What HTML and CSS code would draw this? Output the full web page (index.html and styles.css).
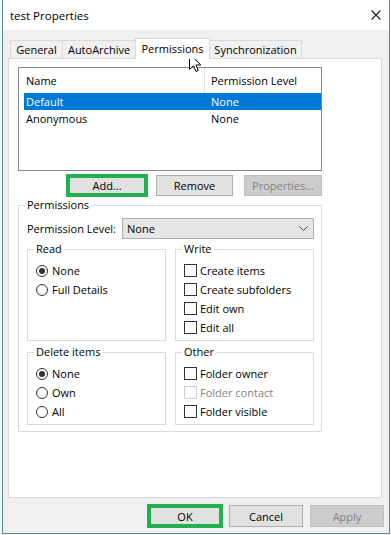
FILE: index.html
```html
<!DOCTYPE html>
<html>
<head>
<meta charset="utf-8">
<title>test Properties</title>
<link rel="stylesheet" href="styles.css">
</head>
<body>
<div class="window">
  <div class="titlebar">
    <span class="title">test Properties</span>
    <svg class="close" width="10" height="10" viewBox="0 0 10 10"><path d="M0.5 0.5 L9.5 9.5 M9.5 0.5 L0.5 9.5" stroke="#1a1a1a" stroke-width="1.1" fill="none"/></svg>
  </div>
  <div class="client">
    <div class="tabs">
      <div class="tab t-general">General</div>
      <div class="tab t-auto">AutoArchive</div>
      <div class="tab t-perm active">Permissions</div>
      <div class="tab t-sync">Synchronization</div>
    </div>
    <div class="page">
      <div class="listbox">
        <div class="lv-head"><div class="lv-h1">Name</div><div class="lv-h2">Permission Level</div></div>
        <div class="lv-row selected"><div class="c1">Default</div><div class="c2">None</div></div>
        <div class="lv-row"><div class="c1">Anonymous</div><div class="c2">None</div></div>
      </div>
      <div class="btnrow">
        <div class="btn green b-add">Add...</div>
        <div class="btn b-remove">Remove</div>
        <div class="btn disabled b-props">Properties...</div>
      </div>
      <fieldset class="group perms">
        <legend>Permissions</legend>
        <div class="levelrow">
          <span class="levellabel">Permission Level:</span>
          <div class="combo"><span>None</span><svg width="9" height="5" viewBox="0 0 9 5"><path d="M0.5 0.5 L4.5 4.5 L8.5 0.5" stroke="#444" stroke-width="1" fill="none"/></svg></div>
        </div>
        <div class="subgrid">
          <fieldset class="group sub">
            <legend>Read</legend>
            <div class="opt"><span class="radio checked"></span>None</div>
            <div class="opt"><span class="radio"></span>Full Details</div>
          </fieldset>
          <fieldset class="group sub">
            <legend>Write</legend>
            <div class="opt"><span class="check"></span>Create items</div>
            <div class="opt"><span class="check"></span>Create subfolders</div>
            <div class="opt"><span class="check"></span>Edit own</div>
            <div class="opt"><span class="check"></span>Edit all</div>
          </fieldset>
          <fieldset class="group sub">
            <legend>Delete items</legend>
            <div class="opt"><span class="radio checked"></span>None</div>
            <div class="opt"><span class="radio"></span>Own</div>
            <div class="opt"><span class="radio"></span>All</div>
          </fieldset>
          <fieldset class="group sub">
            <legend>Other</legend>
            <div class="opt"><span class="check"></span>Folder owner</div>
            <div class="opt dis"><span class="check"></span>Folder contact</div>
            <div class="opt"><span class="check"></span>Folder visible</div>
          </fieldset>
        </div>
      </fieldset>
    </div>
    <div class="footer">
      <div class="btn green b-ok">OK</div>
      <div class="btn b-cancel">Cancel</div>
      <div class="btn disabled b-apply">Apply</div>
    </div>
  </div>
  <svg class="cursor" width="13" height="20" viewBox="0 0 13 20"><path d="M0.5 0.5 V16.5 L4.5 12.8 L7 18.5 L9.3 17.5 L6.9 12 H11.8 Z" fill="#fff" stroke="#000" stroke-width="1" stroke-linejoin="miter"/></svg>
</div>
</body>
</html>
```

FILE: styles.css
```css
* { box-sizing: border-box; }
html, body { margin: 0; padding: 0; }
body {
  background: #f4f6f7;
  font-family: "Open Sans", "Noto Sans", sans-serif;
  font-size: 11px;
  line-height: 15px;
  color: #000;
}
.window {
  position: relative;
  margin-left: 2px;
  width: 388px;
  height: 534px;
  border: 1px solid #5b8c9b;
  border-top: none;
  background: #f0f0f0;
  display: flex;
  flex-direction: column;
}
.titlebar {
  height: 30px;
  background: #fff;
  display: flex;
  align-items: center;
  justify-content: space-between;
  padding: 1px 8px 0 7px;
}
.title { font-size: 11.5px; }
.close { display: block; margin-top: -1px; }

.client {
  flex: 1;
  padding: 8px 0 0 5px;
  display: flex;
  flex-direction: column;
}
.tabs {
  display: flex;
  align-items: flex-end;
  height: 20px;
  margin-left: 2px;
}
.tab {
  height: 18px;
  border: 1px solid #d9d9d9;
  border-bottom: none;
  background: #f0f0f0;
  display: flex;
  align-items: center;
  justify-content: center;
  margin-left: -1px;
  white-space: nowrap;
}
.t-general { width: 53px; margin-left: 0; }
.t-auto { width: 74px; }
.t-perm { width: 75px; }
.t-sync { width: 93px; }
.tab.active {
  height: 21px;
  margin-bottom: -1px;
  background: #fff;
  position: relative;
  z-index: 1;
  padding-bottom: 2px;
}

.page {
  width: 374px;
  height: 440px;
  border: 1px solid #d9d9d9;
  background: #fff;
  padding: 8px 0 0 9px;
}
.listbox {
  width: 304px;
  height: 104px;
  border: 1px solid #828790;
  background: #fff;
}
.lv-head {
  display: flex;
  height: 25px;
  align-items: stretch;
}
.lv-h1 {
  width: 186px;
  border-right: 1px solid #e5e5e5;
  padding-left: 7px;
  display: flex;
  align-items: center;
}
.lv-h2 {
  padding-left: 6px;
  display: flex;
  align-items: center;
}
.lv-row {
  display: flex;
  height: 17px;
  margin-left: 5px;
  align-items: center;
}
.lv-row .c1 { width: 187px; padding-left: 2px; }
.lv-row.selected { background: #0078d7; color: #fff; }

.btnrow {
  display: flex;
  align-items: center;
  height: 23px;
  margin-top: 3px;
}
.btn {
  height: 21px;
  border: 1px solid #adadad;
  background: #e1e1e1;
  display: flex;
  align-items: center;
  justify-content: center;
  white-space: nowrap;
}
.btn.green { border: 4px solid #22b14c; }
.btn.disabled { background: #cccccc; border-color: #bfbfbf; color: #838383; }
.b-add { width: 82px; height: 23px; margin-left: 48px; }
.b-remove { width: 77px; margin-left: 8px; }
.b-props { width: 78px; margin-left: 11px; }

fieldset.group {
  margin: 0;
  min-width: 0;
  border: 1px solid #dcdcdc;
}
fieldset.group legend {
  padding: 0 2px;
  margin-left: -2px;
  line-height: 16px;
}
.perms {
  width: 304px;
  margin-top: 2px;
  padding: 5px 7px 6px 8px;
}
.levelrow {
  display: flex;
  align-items: center;
  height: 21px;
}
.levellabel { flex: 0 0 95px; }
.combo {
  width: 192px;
  height: 21px;
  border: 1px solid #adadad;
  background: #e5e5e5;
  display: flex;
  align-items: center;
  justify-content: space-between;
  padding: 0 5px 0 4px;
}
.combo svg { display: block; }
.subgrid {
  margin-top: 2px;
  display: grid;
  grid-template-columns: 139px 139px;
  column-gap: 9px;
  row-gap: 3px;
}
fieldset.sub {
  padding: 4px 4px 3px 8px;
}
.opt {
  height: 19px;
  display: flex;
  align-items: center;
  white-space: nowrap;
}
.radio {
  width: 12px;
  height: 12px;
  border: 1px solid #333;
  border-radius: 50%;
  background: #fff;
  margin-right: 4px;
  display: flex;
  align-items: center;
  justify-content: center;
}
.radio.checked::after {
  content: "";
  width: 6px;
  height: 6px;
  border-radius: 50%;
  background: #333;
}
.check {
  width: 13px;
  height: 13px;
  border: 1px solid #333;
  background: #fff;
  margin-right: 3px;
}
.opt.dis { color: #838383; }
.opt.dis .check { border-color: #cccccc; }

.footer {
  display: flex;
  justify-content: flex-end;
  align-items: center;
  height: 24px;
  margin-top: 6px;
  padding-right: 5px;
}
.b-ok { width: 76px; height: 24px; }
.b-cancel { width: 74px; height: 22px; margin-left: 6px; }
.b-apply { width: 74px; height: 22px; margin-left: 7px; }

.cursor {
  position: absolute;
  left: 186px;
  top: 53px;
}
```
